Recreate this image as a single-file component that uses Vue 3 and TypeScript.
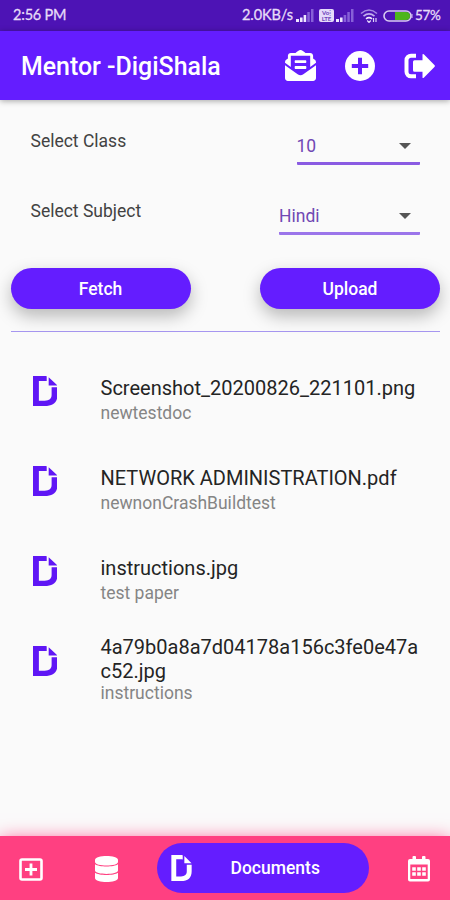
<script setup lang="ts">
interface DocumentItem {
  name: string
  note: string
}

const documents: DocumentItem[] = [
  { name: 'Screenshot_20200826_221101.png', note: 'newtestdoc' },
  { name: 'NETWORK ADMINISTRATION.pdf', note: 'newnonCrashBuildtest' },
  { name: 'instructions.jpg', note: 'test paper' },
  { name: '4a79b0a8a7d04178a156c3fe0e47ac52.jpg', note: 'instructions' },
]

const docPath =
  'M397.9 160H256V19.6L397.9 160zM304 192v130c0 66.8-36.5 100.1-113.3 100.1H96V84.8h94.7c12 0 23.1.8 33.1 2.5v-84C212.9 1.1 201.4 0 189.2 0H0v512h189.2C329.7 512 400 447.4 400 318.1V192h-96z'
</script>

<template>
  <div class="screen">
    <div class="status">
      <span class="time">2:56 PM</span>
      <span class="speed">2.0KB/s</span>
      <svg class="signal" viewBox="0 0 18 13">
        <path d="M0 10h3v3H0zM4 8.500h2.600V13H4zM7.600 6h2.600v7H7.600z" fill="#eee6ff" />
        <path d="M11.300 3h2.500v10h-2.500zM15 0h2.500v13H15z" fill="#8760d8" />
      </svg>
      <span class="volte"><span>Vo⁞</span><span>LTE</span></span>
      <svg class="signal second" viewBox="0 0 18 13">
        <path d="M0 10h3v3H0zM4 8.500h2.600V13H4z" fill="#eee6ff" />
        <path d="M7.600 6h2.600v7H7.600zM11.300 3h2.500v10h-2.500zM15 0h2.500v13H15z" fill="#8760d8" />
      </svg>
      <svg class="wifi" viewBox="0 0 18 14" fill="none" stroke-width="1.600">
        <path d="M1 4.500Q9-2.500 17 4.500" stroke="#a68ae2" />
        <path d="M3.500 7.200Q9 2.700 14.500 7.200" stroke="#c3afee" />
        <path d="M6 9.800Q9 7.500 12 9.800" stroke="#f1eaff" />
        <path d="M7.200 11.500L9 13.500l1.800-2M13.500 9v4M16 13V9" stroke="#ded1fa" stroke-width="1.200" />
      </svg>
      <svg class="battery" viewBox="0 0 30 12">
        <rect x="1" y="1" width="27" height="10" rx="5" fill="#4d13b5" stroke="#d8caf1" stroke-width="1.600" />
        <path d="M12 2h11a4 4 0 0 1 0 8H12z" fill="#4db51d" />
        <path d="M29 4v4" stroke="#d8caf1" />
      </svg>
      <span class="percent">57%</span>
    </div>

    <header class="appbar">
      <h1>Mentor -DigiShala</h1>
      <svg class="mail" viewBox="0 0 512 512" fill="#fff">
        <path d="M176 216h160c8.840 0 16-7.160 16-16v-16c0-8.840-7.160-16-16-16H176c-8.840 0-16 7.160-16 16v16c0 8.840 7.160 16 16 16zm-16 80c0 8.840 7.160 16 16 16h160c8.840 0 16-7.160 16-16v-16c0-8.840-7.160-16-16-16H176c-8.840 0-16 7.160-16 16v16zm96 121.130c-16.420 0-32.840-5.060-46.860-15.190L0 250.860V464c0 26.510 21.490 48 48 48h416c26.510 0 48-21.490 48-48V250.860L302.860 401.940c-14.020 10.120-30.440 15.190-46.860 15.190zm237.610-254.180c-8.850-6.940-17.240-13.470-29.610-22.810V96c0-26.510-21.490-48-48-48h-77.550c-3.040-2.200-5.870-4.260-9.040-6.560C312.600 29.170 279.200-.350 256 0c-23.200-.350-56.590 29.170-73.410 41.440-3.170 2.300-6 4.360-9.040 6.560H96c-26.510 0-48 21.490-48 48v44.140c-12.370 9.330-20.760 15.870-29.610 22.810A47.995 47.995 0 0 0 0 200.720v10.650l96 69.350V96h320v184.720l96-69.350v-10.650c0-14.740-6.780-28.670-18.390-37.770z" />
      </svg>
      <svg class="add" viewBox="0 0 30 30">
        <circle cx="15" cy="15" r="15" fill="#fff" />
        <path d="M15 6.800v16.400M6.800 15h16.400" stroke="#641dff" stroke-width="4" />
      </svg>
      <svg class="exit" viewBox="0 0 31 26" fill="#fff">
        <path d="M12 2.700H7A4.500 4.500 0 0 0 2.500 7.200v11.600A4.500 4.500 0 0 0 7 23.300h5" fill="none" stroke="#fff" stroke-width="4" />
        <path d="M10.500 7.200h8V1.800q0-1.500 1.300-.5l10.600 10.600q1 1.100 0 2.200L19.800 24.700q-1.300 1-1.300-.5v-5.400h-8q-1.500 0-1.500-1.500V8.700q0-1.500 1.500-1.500z" />
      </svg>
    </header>

    <main>
      <section class="form">
        <div class="field">
          <label>Select Class</label>
          <div class="select class-select"><span>10</span><i></i></div>
        </div>
        <div class="field">
          <label>Select Subject</label>
          <div class="select subject-select"><span>Hindi</span><i></i></div>
        </div>
      </section>
      <div class="actions">
        <button>Fetch</button>
        <button>Upload</button>
      </div>
      <div class="divider"></div>
      <ul>
        <li v-for="doc in documents" :key="doc.name">
          <svg class="doc" viewBox="0 0 400 512" preserveAspectRatio="none" fill="#5f16f5"><path :d="docPath" /></svg>
          <div class="info">
            <span class="name">{{ doc.name }}</span>
            <span class="note">{{ doc.note }}</span>
          </div>
        </li>
      </ul>
    </main>

    <nav>
      <svg class="box" viewBox="0 0 24 23" fill="none" stroke="#fff" stroke-width="2.600">
        <rect x="1.500" y="1.500" width="21" height="20" rx="1.500" />
        <path d="M12 5.500v12M6 11.500h12" stroke-width="2.800" />
      </svg>
      <svg class="database" viewBox="0 0 23 26" fill="#fff">
        <path d="M0 4C0-1.300 23-1.300 23 4v2c0 4.700-23 4.700-23 0z" />
        <path d="M0 8.300c4 3 19 3 23 0v6.200c0 4.500-23 4.500-23 0z" />
        <path d="M0 16.700c4 3 19 3 23 0v5.300c0 5.300-23 5.300-23 0z" />
      </svg>
      <div class="active">
        <svg viewBox="0 0 400 512" fill="#fff"><path :d="docPath" /></svg>
        <span>Documents</span>
      </div>
      <svg class="calendar" viewBox="0 0 22 26">
        <path d="M2 3h2.500V1a1 1 0 0 1 1-1h1.500a1 1 0 0 1 1 1v2h6V1a1 1 0 0 1 1-1h1.500a1 1 0 0 1 1 1v2H20a2 2 0 0 1 2 2v18.500a2 2 0 0 1-2 2H2a2 2 0 0 1-2-2V5a2 2 0 0 1 2-2z" fill="#fff" />
        <path d="M2.300 8.500h17.400v14.500H2.300z" fill="#ff4081" />
        <path d="M4.200 11.200h3.600v3.600H4.200zm5 0h3.600v3.600H9.200zm5 0h3.600v3.600h-3.600zm-10 5h3.600v3.600H4.200zm5 0h3.600v3.600H9.200zm5 0h3.600v3.600h-3.600z" fill="#fff" />
      </svg>
    </nav>
  </div>
</template>

<style>
body { margin: 0; background: #fafafa; }
</style>

<style scoped>
* { box-sizing: border-box; }
.screen {
  height: 900px;
  display: flex;
  flex-direction: column;
  overflow: hidden;
  background: #fafafa;
  font-family: Roboto, sans-serif;
}
svg { display: block; flex: none; }
.status {
  height: 31px;
  flex: none;
  display: flex;
  align-items: center;
  padding: 0 8px 2px 13px;
  background: #4d13b5;
  color: #e6dcf8;
  font-family: Lato, sans-serif;
  font-size: 14.500px;
  -webkit-text-stroke: .3px #e6dcf8;
  white-space: nowrap;
}
.time { flex: 1; letter-spacing: -.2px; }
.speed { width: 54px; letter-spacing: -.1px; }
.signal { width: 18px; height: 13px; margin-top: 2px; }
.volte {
  width: 15px; height: 13px; margin: 2px 2px 0 5px;
  display: flex; flex-direction: column; align-items: center; justify-content: center;
  border-radius: 2px; background: #e5dafa; color: #6c43ba;
  font-size: 6px; line-height: 6px; font-weight: 700;
  -webkit-text-stroke: 0;
}
.wifi { width: 18px; height: 14px; margin: 3px 5px 0 6px; }
.battery { width: 30px; height: 12px; margin: 2px 2px 0 0; }
.percent { width: 27px; padding-top: 1px; font-size: 13.500px; letter-spacing: -.3px; }
.appbar {
  height: 69px;
  flex: none;
  display: flex;
  align-items: center;
  padding: 0 15px 0 21px;
  background: #641dff;
  color: #fff;
  box-shadow: 0 1px 6px rgba(0, 0, 0, .35);
}
h1 { flex: 1; margin: 0; padding-top: 2px; font-size: 24.900px; font-weight: 500; line-height: 30px; white-space: nowrap; }
.mail { width: 31px; height: 31px; margin-right: 29px; }
.add { width: 30px; height: 30px; margin-right: 29px; }
.exit { width: 31px; height: 26px; }
main { flex: 1; }
.form { padding: 23px 30px 0 30.500px; }
.field { height: 70px; display: flex; justify-content: space-between; }
label { color: #424242; font-size: 17.500px; line-height: 36px; }
.select {
  height: 42px;
  display: flex;
  align-items: center;
  justify-content: space-between;
  padding: 6px 9px 0 0;
  border-bottom: 3px solid #8a5be2;
  border-radius: 1px;
  color: #7048b4;
  font-size: 17.500px;
}
.class-select { width: 123.500px; }
.subject-select { width: 141px; border-bottom-color: #9b75ea; }
.select i { border: 6px solid transparent; border-top-color: #555; border-bottom: 0; }
.actions {
  display: flex;
  justify-content: space-between;
  margin: 0 10px 0 10.500px;
  padding: 5px 0 22px;
}
.divider { height: 1px; margin: 0 10px 0 11px; background: #a696f0; }
button {
  width: 180px; height: 41px; padding: 0;
  border: 0; border-radius: 21px;
  background: #641dff; color: #fff;
  font: 500 17.500px Roboto, sans-serif;
  box-shadow: 0 7px 17px rgba(0, 0, 0, .27);
}
ul { margin: 14px 0 0; padding: 0; list-style: none; }
li { height: 90px; display: flex; align-items: center; padding: 0 30px 0 32.500px; }
.doc { width: 24.500px; height: 30px; margin-right: 43.500px; }
.info { flex: 1; min-width: 0; display: flex; flex-direction: column; padding-top: 16px; }
.name { color: #242424; font-size: 20px; line-height: 24px; overflow-wrap: anywhere; }
.note { color: #858585; font-size: 17.500px; line-height: 20px; padding-top: 3px; }
li:last-child .info { padding-top: 16px; }
li:last-child .note { padding-top: 0; }
nav {
  height: 64px;
  flex: none;
  display: flex;
  align-items: center;
  padding: 0 20px 0 19px;
  background: #ff4081;
  box-shadow: 0 4px 18px #ff4081;
}
.box { width: 24px; height: 23px; margin: 2px 52px 0 0; }
.database { width: 23px; height: 26px; margin: 2px 39px 0 0; }
.active {
  width: 212px; height: 50px;
  display: flex; align-items: center;
  border-radius: 25px; background: #641dff; color: #fff;
  padding-left: 14px; margin: 0 39px 0 0;
}
.active svg { width: 21px; height: 26px; margin-right: 38.500px; }
.active span { font-size: 17.500px; font-weight: 500; }
.calendar { width: 22px; height: 26px; margin-top: 1px; }
</style>
